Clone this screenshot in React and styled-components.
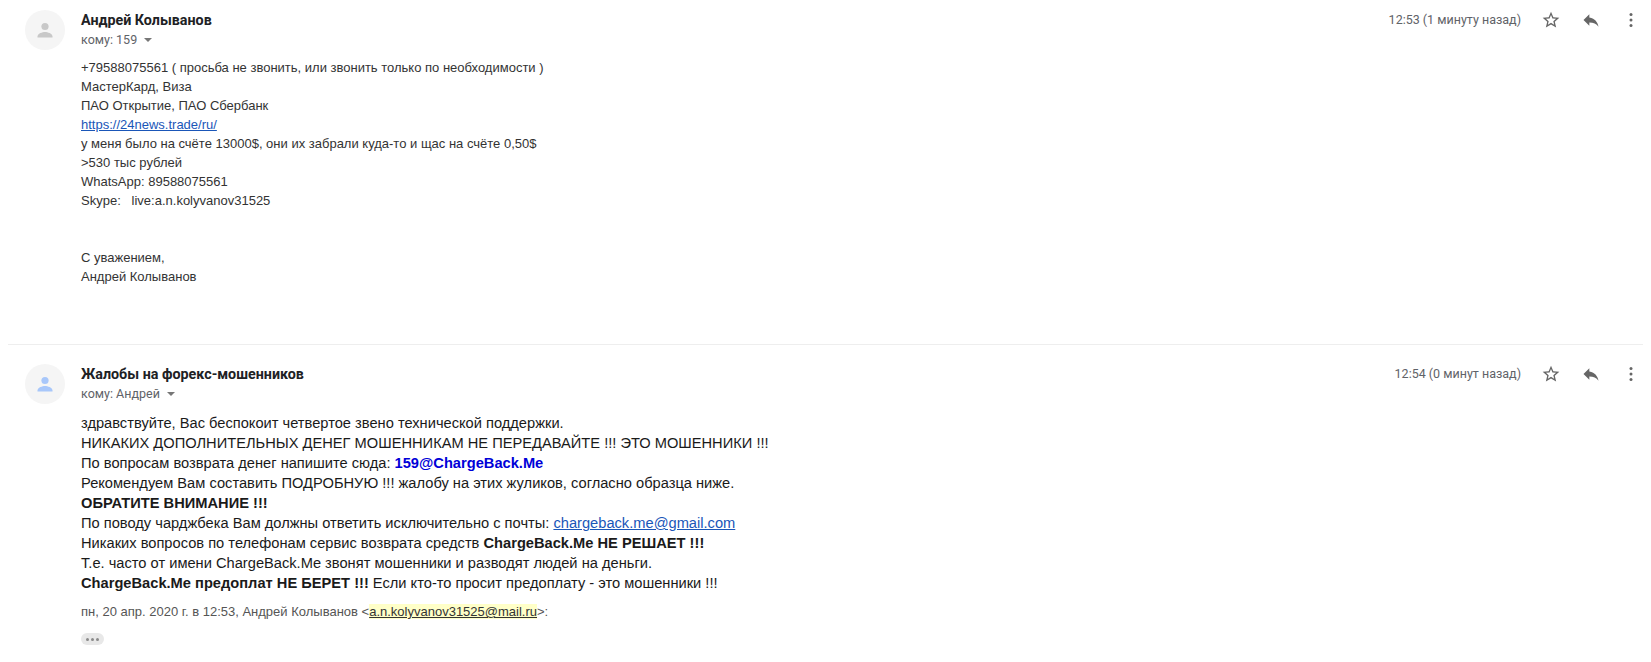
import React from "react";
import styled, { createGlobalStyle } from "styled-components";

const GlobalStyle = createGlobalStyle`
  html, body {
    margin: 0;
    padding: 0;
    background: #fff;
  }
  body {
    font-family: "Liberation Sans", Arial, sans-serif;
    overflow: hidden;
  }
`;

const Page = styled.div`
  width: 1651px;
  height: 662px;
  padding-top: 10px;
  box-sizing: border-box;
`;

const Message = styled.section`
  display: grid;
  grid-template-columns: 40px 1fr;
  column-gap: 16px;
  padding: 0 10px 0 25px;
  min-height: ${(p) => p.$height}px;
`;

const Divider = styled.hr`
  margin: 0 8px 19px 8px;
  border: 0;
  border-top: 1px solid #eeeeee;
`;

const Avatar = styled.div`
  width: 40px;
  height: 40px;
  border-radius: 50%;
  background: #f5f5f5;
  display: flex;
  align-items: center;
  justify-content: center;
  color: ${(p) => p.$color};
`;

const Content = styled.div`
  min-width: 0;
`;

const Header = styled.header`
  display: flex;
  justify-content: space-between;
  align-items: flex-start;
`;

const Sender = styled.div`
  font-family: Roboto, "Liberation Sans", sans-serif;
  font-size: 14.3px;
  font-weight: 700;
  line-height: 20px;
  color: #202124;
`;

const Recipient = styled.div`
  display: flex;
  align-items: center;
  gap: 7px;
  font-family: Roboto, "Liberation Sans", sans-serif;
  font-size: 12.5px;
  line-height: 20px;
  color: #5f6368;
`;

const Caret = styled.span`
  width: 0;
  height: 0;
  border-left: 4px solid transparent;
  border-right: 4px solid transparent;
  border-top: 4px solid #777;
`;

const Actions = styled.div`
  display: flex;
  align-items: center;
  color: #666;
`;

const Time = styled.span`
  font-family: Roboto, "Liberation Sans", sans-serif;
  font-size: 12.5px;
  line-height: 20px;
  color: #5f6368;
  margin-right: 20px;
`;

const ActionIcon = styled.span`
  display: flex;
  width: 20px;
  height: 20px;
  margin-left: ${(p) => p.$gap || 0}px;
`;

const PlainBody = styled.div`
  font-size: 13px;
  line-height: 19px;
  color: #333;
  margin-top: 8px;
  white-space: pre-wrap;
`;

const RichBody = styled.div`
  font-size: 14.67px;
  line-height: 20px;
  color: #1a1a1a;
  margin-top: 9px;
`;

const Line = styled.div`
  min-height: ${(p) => (p.$empty ? "19px" : "auto")};
`;

const Link = styled.a`
  color: #1a56b8;
  text-decoration: underline;
`;

const BlueStrong = styled.b`
  color: #0000d8;
`;

const Quote = styled.div`
  font-size: 13px;
  line-height: 18px;
  color: #555;
  margin-top: 10px;
`;

const Highlight = styled.a`
  color: #333;
  background: #ffffc8;
  text-decoration: underline;
`;

const MoreButton = styled.div`
  display: flex;
  align-items: center;
  justify-content: center;
  gap: 2px;
  width: 23px;
  height: 12px;
  margin-top: 12px;
  border-radius: 6px;
  background: #e8e8e8;
`;

const Dot = styled.i`
  width: 3px;
  height: 3px;
  border-radius: 50%;
  background: #8a8a8a;
`;

const PersonIcon = () => (
  <svg width="24" height="24" viewBox="0 0 24 24" fill="currentColor">
    <circle cx="12" cy="8.5" r="3.6" />
    <path d="M4.5 18.5c0-2.9 5-4.4 7.5-4.4s7.5 1.5 7.5 4.4v1H4.5z" />
  </svg>
);

const StarIcon = () => (
  <svg width="20" height="20" viewBox="0 0 24 24" fill="currentColor">
    <path d="M22 9.24l-7.19-.62L12 2 9.19 8.63 2 9.24l5.46 4.73L5.82 21 12 17.27 18.18 21l-1.63-7.03L22 9.24zM12 15.4l-3.76 2.27 1-4.28-3.32-2.88 4.38-.38L12 6.1l1.71 4.04 4.38.38-3.32 2.88 1 4.28L12 15.4z" />
  </svg>
);

const ReplyIcon = () => (
  <svg width="20" height="20" viewBox="0 0 24 24" fill="currentColor">
    <path d="M10 9V5l-7 7 7 7v-4.1c5 0 8.5 1.6 11 5.1-1-5-4-10-11-11z" />
  </svg>
);

const MoreIcon = () => (
  <svg width="20" height="20" viewBox="0 0 24 24" fill="currentColor">
    <circle cx="12" cy="5.5" r="1.8" />
    <circle cx="12" cy="12" r="1.8" />
    <circle cx="12" cy="18.5" r="1.8" />
  </svg>
);

const MessageHeader = ({ sender, to, time }) => (
  <Header>
    <div>
      <Sender>{sender}</Sender>
      <Recipient>
        кому: {to}
        <Caret />
      </Recipient>
    </div>
    <Actions>
      <Time>{time}</Time>
      <ActionIcon><StarIcon /></ActionIcon>
      <ActionIcon $gap={20}><ReplyIcon /></ActionIcon>
      <ActionIcon $gap={20}><MoreIcon /></ActionIcon>
    </Actions>
  </Header>
);

const firstLines = [
  "+79588075561 ( просьба не звонить, или звонить только по необходимости )",
  "МастерКард, Виза",
  "ПАО Открытие, ПАО Сбербанк",
  <Link key="link">https://24news.trade/ru/</Link>,
  "у меня было на счёте 13000$, они их забрали куда-то и щас на счёте 0,50$",
  ">530 тыс рублей",
  "WhatsApp: 89588075561",
  "Skype:   live:a.n.kolyvanov31525",
  "",
  "",
  "С уважением,",
  "Андрей Колыванов",
];

const App = () => (
  <Page>
    <GlobalStyle />
    <Message $height={334}>
      <Avatar $color="#c8c8c8"><PersonIcon /></Avatar>
      <Content>
        <MessageHeader sender="Андрей Колыванов" to="159" time="12:53 (1 минуту назад)" />
        <PlainBody>
          {firstLines.map((line, i) => (
            <Line key={i} $empty={line === ""}>{line}</Line>
          ))}
        </PlainBody>
      </Content>
    </Message>
    <Divider />
    <Message>
      <Avatar $color="#a8c7fa"><PersonIcon /></Avatar>
      <Content>
        <MessageHeader sender="Жалобы на форекс-мошенников" to="Андрей" time="12:54 (0 минут назад)" />
        <RichBody>
          <Line>здравствуйте, Вас беспокоит четвертое звено технической поддержки.</Line>
          <Line>НИКАКИХ ДОПОЛНИТЕЛЬНЫХ ДЕНЕГ МОШЕННИКАМ НЕ ПЕРЕДАВАЙТЕ !!! ЭТО МОШЕННИКИ !!!</Line>
          <Line>По вопросам возврата денег напишите сюда: <BlueStrong>159@ChargeBack.Me</BlueStrong></Line>
          <Line>Рекомендуем Вам составить ПОДРОБНУЮ !!! жалобу на этих жуликов, согласно образца ниже.</Line>
          <Line><b>ОБРАТИТЕ ВНИМАНИЕ !!!</b></Line>
          <Line>По поводу чарджбека Вам должны ответить исключительно с почты: <Link>chargeback.me@gmail.com</Link></Line>
          <Line>Никаких вопросов по телефонам сервис возврата средств <b>ChargeBack.Me НЕ РЕШАЕТ !!!</b></Line>
          <Line>Т.е. часто от имени ChargeBack.Me звонят мошенники и разводят людей на деньги.</Line>
          <Line><b>ChargeBack.Me предоплат НЕ БЕРЕТ !!!</b> Если кто-то просит предоплату - это мошенники !!!</Line>
        </RichBody>
        <Quote>
          пн, 20 апр. 2020 г. в 12:53, Андрей Колыванов &lt;<Highlight>a.n.kolyvanov31525@mail.ru</Highlight>&gt;:
        </Quote>
        <MoreButton><Dot /><Dot /><Dot /></MoreButton>
      </Content>
    </Message>
  </Page>
);

export default App;
